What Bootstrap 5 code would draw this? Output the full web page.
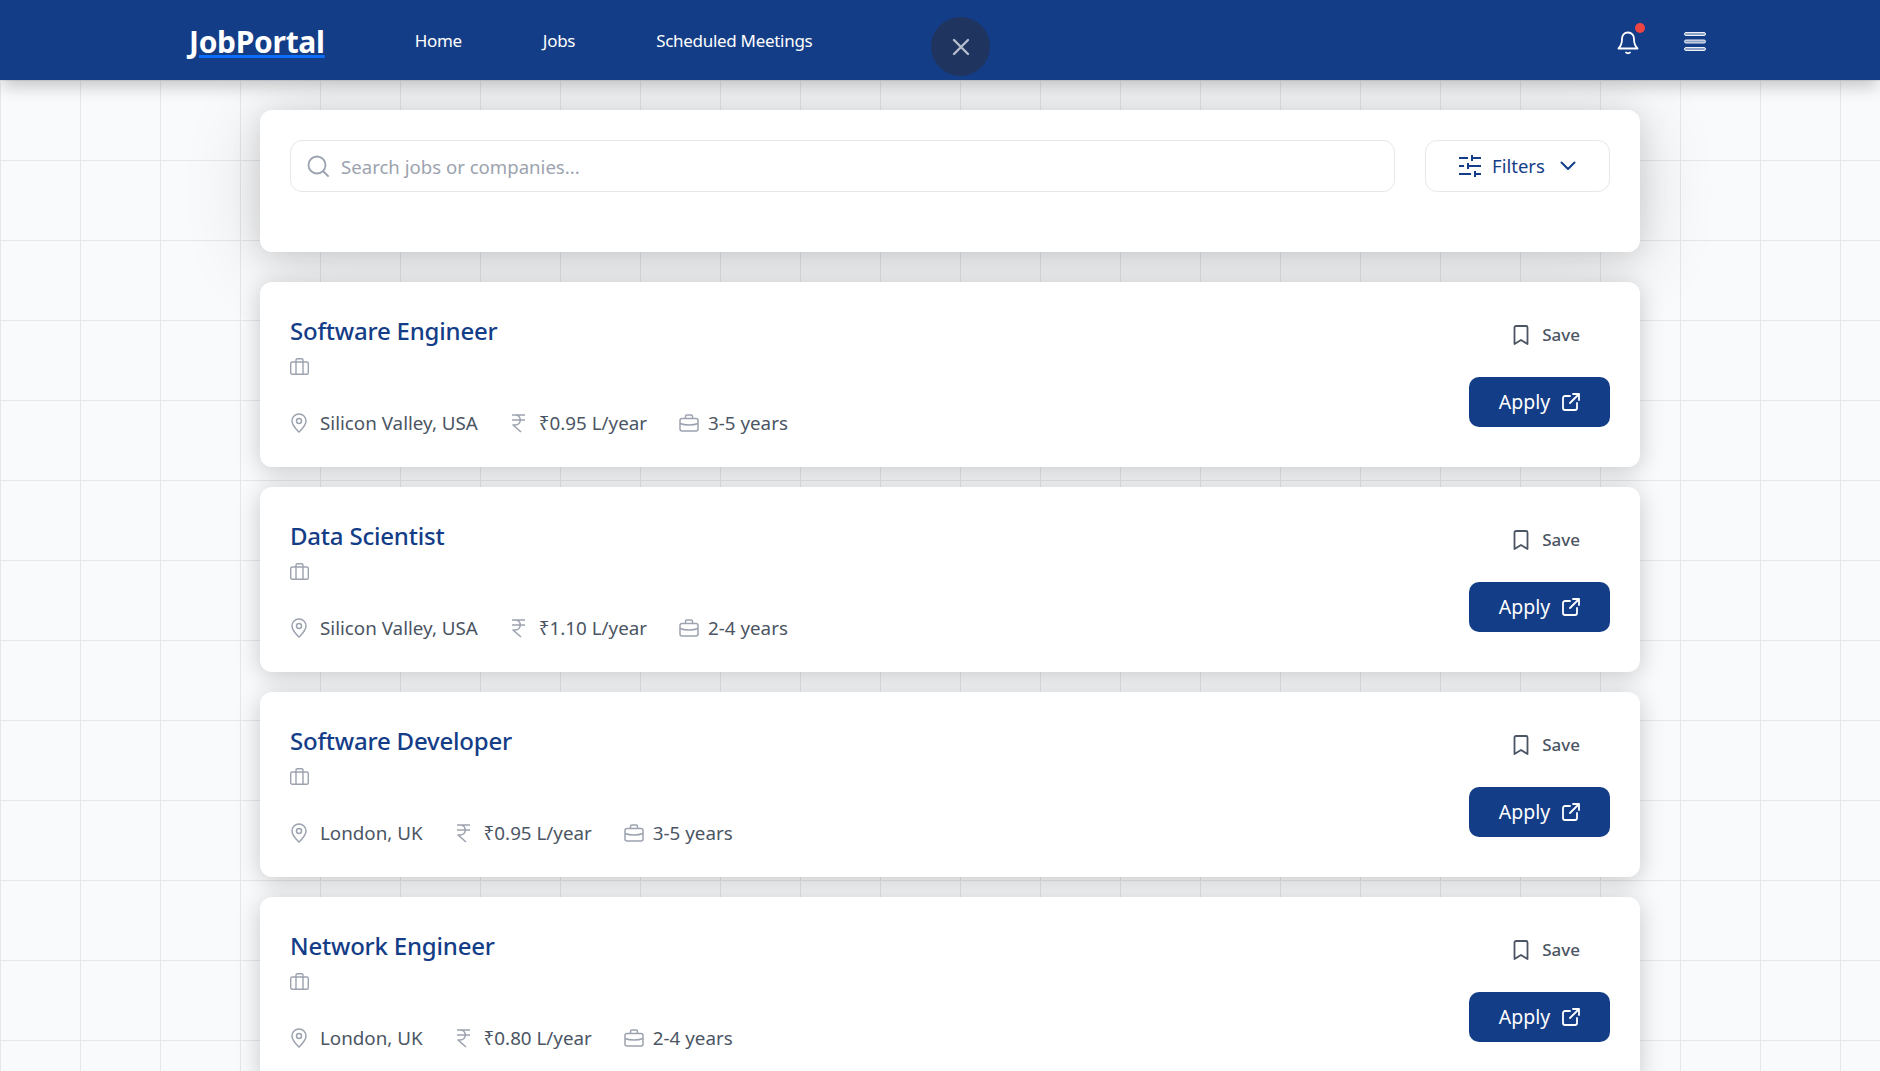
<!DOCTYPE html>
<html lang="en">
<head>
<meta charset="UTF-8" />
<title>JobPortal</title>
<link href="https://cdn.jsdelivr.net/npm/bootstrap@5.3.3/dist/css/bootstrap.min.css" rel="stylesheet" />
<style>
  html, body { height: 100%; overflow: hidden; }
  body {
    font-family: "Noto Sans", "Open Sans", sans-serif;
    background-color: #f9fafb;
    background-image: linear-gradient(#e5e7eb 1px, transparent 1px), linear-gradient(90deg, #e5e7eb 1px, transparent 1px);
    background-size: 80px 80px;
  }
  .top-bar { height: 80px; background: #143d87; padding: 2px 174px 0 189px; box-shadow: 0 10px 15px -3px rgba(0,0,0,.2); position: relative; z-index: 2; }
  .brand-link { font-size: 30px; font-weight: 700; color: #fff; text-decoration: underline; text-decoration-color: #0d6efd; text-underline-offset: 2px; letter-spacing: -.3px; }
  .menu-links { margin-left: 90px; gap: 81px; }
  .menu-links a { color: #fff; font-size: 17px; text-decoration: none; padding: 0; letter-spacing: -.3px; }
  .close-round { position: absolute; left: 931px; top: 17px; width: 59px; height: 59px; border-radius: 50%; background: #1f3560; color: #b5bdcd; }
  .dot-red { position: absolute; top: -6px; right: -7px; width: 10px; height: 10px; border-radius: 50%; background: #ef4444; }
  .bell-wrap { position: relative; width: 21px; height: 24px; margin-right: 46px; }
  .page-wrap { width: 1380px; margin: 30px 0 0 260px; }
  .panel { border: 0; border-radius: 12px; background: #fff; }
  .search-panel { height: 142px; padding: 30px; box-shadow: 0 4px 30px rgba(0,0,0,.12), 0 10px 80px rgba(0,0,0,.14); margin-bottom: 30px; }
  .search-box { width: 1105px; height: 52px; border: 1px solid #e5e7eb; border-radius: 12px; padding: 0 16px; gap: 10px; }
  .search-box input { border: 0; outline: 0; flex: 1; font-size: 18.6px; color: #374151; padding-top: 2px; }
  .search-box input::placeholder { color: #9ca3af; }
  .filter-btn { width: 185px; height: 52px; border: 1px solid #e5e7eb; border-radius: 12px; color: #143d87; font-size: 18.5px; gap: 11px; background: #fff; }
  .job-panel { height: 185px; padding: 30px; margin-bottom: 20px; box-shadow: 0 4px 24px rgba(0,0,0,.2); }
  .job-name { font-size: 24px; font-weight: 500; color: #143d87; margin: 2px 0 10px; line-height: 34px; letter-spacing: -.2px; }
  .job-meta { gap: 32px; font-size: 18.8px; color: #4b5563; margin-top: 34px; }
  .job-meta span { gap: 12px; }
  .job-meta span.exp-item { gap: 9px; }
  .save-link { color: #4b5563; font-size: 17px; font-weight: 500; gap: 13px; margin-right: 30px; height: 50px; }
  .apply-btn { width: 141px; height: 50px; background: #143d87; color: #fff; font-size: 19.500px; border-radius: 10px; gap: 12px; border: 0; margin-top: 17px; }
  .apply-btn:hover { background: #143d87; color: #fff; }
  .job-side { margin-top: -2px; }
</style>
</head>
<body>

<nav class="top-bar d-flex align-items-center">
  <a href="#" class="brand-link">JobPortal</a>
  <div class="menu-links d-flex">
    <a href="#">Home</a>
    <a href="#">Jobs</a>
    <a href="#">Scheduled Meetings</a>
  </div>
  <button class="close-round btn p-0 d-flex align-items-center justify-content-center" aria-label="Close">
    <svg width="20" height="20" viewBox="0 0 20 20" fill="none" stroke="currentColor" stroke-width="2.4" stroke-linecap="round"><path d="M3 3l14 14M17 3L3 17"/></svg>
  </button>
  <div class="ms-auto d-flex align-items-center">
    <div class="bell-wrap">
      <svg width="22" height="24" viewBox="0 0 22 24" fill="none" stroke="#fff" stroke-width="1.8" stroke-linecap="round" stroke-linejoin="round"><path d="M11 1.500c-3.800 0-6 3-6 6.500 0 5-1.500 7.500-3.500 9.500h19c-2-2-3.500-4.500-3.500-9.500 0-3.500-2.200-6.500-6-6.500z"/><path d="M9 21.500c.8 1 3.200 1 4 0"/></svg>
      <span class="dot-red"></span>
    </div>
    <svg width="22" height="19" viewBox="0 0 22 19" fill="#8fa3c6" stroke="#fff" stroke-width=".9"><rect x=".5" y=".5" width="21" height="3" rx="1.500"/><rect x=".5" y="8" width="21" height="3" rx="1.500"/><rect x=".5" y="15.500" width="21" height="3" rx="1.500"/></svg>
  </div>
</nav>

<main class="page-wrap">
  <div class="panel search-panel d-flex justify-content-between align-items-start">
    <div class="search-box d-flex align-items-center">
      <svg width="22" height="22" viewBox="0 0 22 22" fill="none" stroke="#9ca3af" stroke-width="1.800" stroke-linecap="round"><circle cx="10" cy="10" r="8.500"/><path d="M16.500 16.500L21 21"/></svg>
      <input type="text" placeholder="Search jobs or companies..." />
    </div>
    <button class="filter-btn d-flex align-items-center justify-content-center">
      <svg width="22" height="22" viewBox="0 0 22 22" fill="none" stroke="currentColor" stroke-width="2"><path d="M0 3h9M13 3h9M13 0v6M0 11h5M9 11h13M9 8v6M0 19h12M16 19h6M16 16v6"/></svg>
      Filters
      <svg class="ms-1" width="16" height="10" viewBox="0 0 16 10" fill="none" stroke="currentColor" stroke-width="2" stroke-linecap="round" stroke-linejoin="round"><path d="M1.500 1.500L8 8l6.500-6.500"/></svg>
    </button>
  </div>

  <div id="jobs"></div>
</main>

<script>
  const JOBS = [
    { title: 'Software Engineer', place: 'Silicon Valley, USA', pay: '₹0.95 L/year', exp: '3-5 years' },
    { title: 'Data Scientist', place: 'Silicon Valley, USA', pay: '₹1.10 L/year', exp: '2-4 years' },
    { title: 'Software Developer', place: 'London, UK', pay: '₹0.95 L/year', exp: '3-5 years' },
    { title: 'Network Engineer', place: 'London, UK', pay: '₹0.80 L/year', exp: '2-4 years' }
  ];

  const ICON_CASE = '<svg width="19" height="17" viewBox="0 0 19 17" fill="none" stroke="#9ca3af" stroke-width="1.400"><rect x=".7" y="4" width="17.600" height="12.300" rx="1.500"/><path d="M6 16.300V2a1.300 1.300 0 0 1 1.300-1.300h4.400A1.300 1.300 0 0 1 13 2v14.300"/></svg>';
  const ICON_PIN = '<svg width="18" height="20" viewBox="0 0 18 20" fill="none" stroke="#9ca3af" stroke-width="1.500"><path d="M9 19c-3-3-7-6.500-7-11a7 7 0 0 1 14 0c0 4.500-4 8-7 11z"/><circle cx="9" cy="8" r="2.500"/></svg>';
  const ICON_RUPEE = '<svg width="17" height="20" viewBox="0 0 17 20" fill="none" stroke="#9ca3af" stroke-width="1.600" stroke-linejoin="round"><path d="M2 2h13M2 7h13M5 2c7 0 7 10 0 10H3l8 7"/></svg>';
  const ICON_BAG = '<svg width="20" height="18" viewBox="0 0 20 18" fill="none" stroke="#9ca3af" stroke-width="1.500"><rect x="1" y="4.500" width="18" height="12.500" rx="2"/><path d="M6.500 4.500V2.500a1.500 1.500 0 0 1 1.500-1.500h4a1.500 1.500 0 0 1 1.500 1.500v2M1 9.500c5 2 13 2 18 0"/></svg>';
  const ICON_MARK = '<svg width="16" height="20" viewBox="0 0 16 20" fill="none" stroke="#4b5563" stroke-width="1.800" stroke-linejoin="round"><path d="M1.500 2.500a1.500 1.500 0 0 1 1.500-1.500h10a1.500 1.500 0 0 1 1.500 1.500V19L8 15l-6.500 4z"/></svg>';
  const ICON_OUT = '<svg width="18" height="18" viewBox="0 0 18 18" fill="none" stroke="#fff" stroke-width="1.800" stroke-linecap="round" stroke-linejoin="round"><path d="M8 3H3a2 2 0 0 0-2 2v10a2 2 0 0 0 2 2h10a2 2 0 0 0 2-2v-5M11 1h6v6M17 1L8 10"/></svg>';

  document.getElementById('jobs').innerHTML = JOBS.map(j => `
    <div class="panel job-panel d-flex justify-content-between">
      <div>
        <h2 class="job-name">${j.title}</h2>
        <div class="d-flex">${ICON_CASE}</div>
        <div class="job-meta d-flex">
          <span class="d-flex align-items-center">${ICON_PIN}${j.place}</span>
          <span class="d-flex align-items-center">${ICON_RUPEE}${j.pay}</span>
          <span class="exp-item d-flex align-items-center">${ICON_BAG}${j.exp}</span>
        </div>
      </div>
      <div class="job-side d-flex flex-column align-items-end">
        <a class="save-link d-flex align-items-center text-decoration-none" href="#">${ICON_MARK}Save</a>
        <a class="apply-btn btn d-flex align-items-center justify-content-center" href="#">Apply ${ICON_OUT}</a>
      </div>
    </div>`).join('');
</script>
<script src="https://cdn.jsdelivr.net/npm/bootstrap@5.3.3/dist/js/bootstrap.bundle.min.js"></script>
</body>
</html>
